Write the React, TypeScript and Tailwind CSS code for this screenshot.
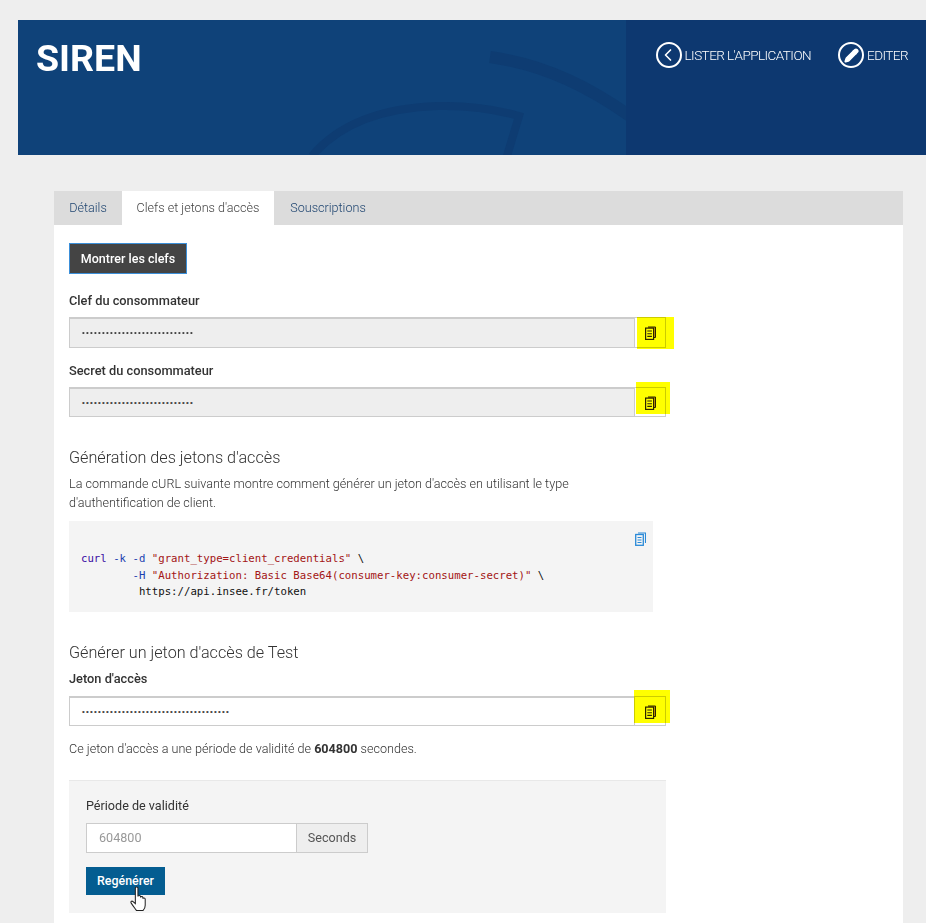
import { ChevronLeft, Pencil } from "lucide-react";

const tabs = [
  { name: "Détails", active: false, pad: "w-[68px]" },
  { name: "Clefs et jetons d'accès", active: true, pad: "w-[152px]" },
  { name: "Souscriptions", active: false, pad: "w-[108px]" },
];

function CopyIcon({ color = "#2a2400", fill = "#d9a400" }: { color?: string; fill?: string }) {
  return (
    <svg width="11" height="14" viewBox="0 0 11 14" fill="none" className="block">
      <path d="M3 1h7.500v10.500H8.500" stroke={color} strokeWidth="1" fill={fill} />
      <rect x="0.6" y="2.1" width="8" height="11.300" stroke={color} strokeWidth="1.200" fill="#ffff00" />
      <path d="M2.300 5h4.600M2.300 7.700h4.600M2.300 10.400h4.600" stroke={color} strokeWidth="1.100" />
    </svg>
  );
}

function SecretField({ label, dots, disabled, highlight, topClass, height, labelGap }: { label: string; dots: number; disabled?: boolean; highlight: string; topClass: string; height: string; labelGap: string }) {
  return (
    <div className={topClass}>
      <label className={`block text-[12.8px] leading-[18px] font-medium text-[#333] ${labelGap}`}>{label}</label>
      <div className={`relative flex w-[597px] ${height}`}>
        <div className={`flex-1 flex items-center pl-[12px] border border-t-2 border-[#cccccc] text-[#444] ${disabled ? "bg-[#eeeeee]" : "bg-white"}`}>
          {"•".repeat(dots).split("").map((d, i) => (
            <span key={i} className="text-[8px] w-[4px] leading-none font-['Liberation_Sans',sans-serif]">{d}</span>
          ))}
        </div>
        <div className="w-[32px] -ml-px border border-[#cccccc] bg-white" />
        {/* marker surligné par dessus le bouton */}
        <div className={`absolute bg-[#ffff00] mix-blend-multiply ${highlight}`} />
        <div className="absolute left-[576px] top-[9px]">
          <CopyIcon />
        </div>
      </div>
    </div>
  );
}

export default function App() {
  return (
    <div className="h-[923px] overflow-hidden bg-[#eeeeee] pt-[20px] font-['Roboto',sans-serif] text-[#333]">
      <header className="relative ml-[18px] h-[135px] bg-[#0f4279] overflow-hidden flex">
        <svg className="absolute left-0 top-0" width="908" height="135" viewBox="0 0 908 135" fill="none">
          <path d="M472 37C530 45 575 70 612 96" stroke="#0e3c72" strokeWidth="12" />
          <path d="M294 136C320 105 360 88 420 86C455 85 480 90 501 96L489 136" stroke="#0e3c72" strokeWidth="8" />
        </svg>
        <h1 className="relative flex-1 pl-[18px] pt-[15px] text-[37.500px] leading-[46px] font-bold text-white">SIREN</h1>
        <div className="relative w-[300px] bg-[#0d3870] flex items-start justify-end gap-[27px] pt-[22px] pr-[18px] text-white text-[13.500px] font-light">
          <a className="flex items-center gap-[3px] tracking-[-0.55px]">
            <span className="w-[26px] h-[26px] rounded-full border-2 border-white flex items-center justify-center">
              <ChevronLeft size={20} strokeWidth={2} className="-ml-[2px]" />
            </span>
            LISTER L'APPLICATION
          </a>
          <a className="flex items-center gap-[3px] tracking-[-0.55px]">
            <span className="w-[26px] h-[26px] rounded-full border-2 border-white flex items-center justify-center">
              <Pencil size={15} strokeWidth={2.500} fill="white" />
            </span>
            EDITER
          </a>
        </div>
      </header>

      <main className="ml-[54px] mr-[23px] mt-[36px]">
        <nav className="flex h-[34px] bg-[#dcdcdc]">
          {tabs.map((t) => (
            <a
              key={t.name}
              className={`flex items-center justify-center text-[12.600px] font-light ${t.pad} ${t.active ? "bg-white text-[#444]" : "text-[#1f4570]"}`}
            >
              {t.name}
            </a>
          ))}
        </nav>

        <section className="bg-white h-[700px] pl-[15px] pt-[18px]">
          <button className="block w-[118px] h-[31px] pt-[1px] bg-[#444444] border border-[#3b8fd9] text-white text-[12.500px] font-medium">
            Montrer les clefs
          </button>

          <SecretField label="Clef du consommateur" dots={28} disabled height="h-[31px]" labelGap="mb-[7px]" topClass="mt-[18px]" highlight="left-[568px] top-0 w-[37px] h-[32px]" />
          <SecretField label="Secret du consommateur" dots={28} disabled height="h-[30px]" labelGap="mb-[7px]" topClass="mt-[14px]" highlight="left-[567px] -top-[5px] w-[34px] h-[32px]" />

          <div className="w-[584px]">
            <h3 className="mt-[29px] text-[16.200px] leading-[24px] font-light text-[#333]">Génération des jetons d'accès</h3>
            <p className="mt-[4px] text-[12.600px] leading-[19px] font-light text-[#333]">
              La commande cURL suivante montre comment générer un jeton d'accès en utilisant le type
              <br />
              d'authentification de client.
            </p>
            <div className="relative mt-[9px] h-[91px] bg-[#f4f4f4] pl-[12px] pt-[30px] font-['DejaVu_Sans_Mono',monospace] text-[10.700px] leading-[16.500px] whitespace-pre text-[#111]">
              <div className="absolute right-[7px] top-[11px]">
                <svg width="11" height="14" viewBox="0 0 11 14" fill="none" stroke="#2a8ad8" className="block">
                  <path d="M3 1h7.500v10" strokeWidth="1.100" />
                  <rect x="0.7" y="2.500" width="7.600" height="10.800" strokeWidth="1.300" />
                  <path d="M2.500 5.500h4M2.500 8h4M2.500 10.500h4" strokeWidth="1" />
                </svg>
              </div>
              <div>
                <span className="text-[#3a0ca3]">curl</span> <span className="text-[#1a3fb0]">-k -d</span>{" "}
                <span className="text-[#a31515]">"grant_type=client_credentials"</span> \
              </div>
              <div>
                {"        "}
                <span className="text-[#1a3fb0]">-H</span>{" "}
                <span className="text-[#a31515]">"Authorization: Basic Base64(consumer-key:consumer-secret)"</span> \
              </div>
              <div>{"         "}https://api.insee.fr/token</div>
            </div>
            <h3 className="mt-[29px] text-[16.200px] leading-[24px] font-light text-[#333]">Générer un jeton d'accès de Test</h3>
          </div>

          <SecretField label="Jeton d'accès" dots={37} height="h-[30px]" labelGap="mb-[8px]" topClass="mt-[5px]" highlight="left-[565px] -top-[6px] w-[36px] h-[33px]" />

          <p className="mt-[13px] text-[12.600px] leading-[19px] font-light">
            Ce jeton d'accès a une période de validité de <strong className="font-bold">604800</strong> secondes.
          </p>

          <div className="mt-[22px] w-[597px] h-[133px] bg-[#f4f4f4] border-t border-[#e8e8e8] pl-[17px] pt-[16px]">
            <label className="block text-[12.600px] leading-[18px] font-normal text-[#333]">Période de validité</label>
            <div className="flex mt-[8px] w-[282px] h-[30px]">
              <div className="w-[210px] bg-white border border-r-0 border-[#cccccc] flex items-center pl-[12px] text-[12.600px] text-[#999]">604800</div>
              <div className="flex-1 bg-[#eeeeee] border border-[#cccccc] flex items-center justify-center text-[12.600px] text-[#555]">Seconds</div>
            </div>
            <button className="relative block mt-[14px] w-[79px] h-[28px] bg-[#045d91] text-white text-[12.400px] font-medium">
              Regénérer
              <svg className="absolute left-[43px] top-[19px]" width="21" height="27" viewBox="0 0 20 26" fill="white" stroke="#222" strokeWidth="1">
                <path d="M6 2c0-1.500 2.500-1.500 2.500 0v8c0-1 2-1.500 2.500 0v1c0-1 2-1.300 2.300.2v1c.3-1 2-1 2.200.3v6c0 2-1 4-2 5H7c-1-1.500-3-4-5-7-1-1.500.5-2.500 1.800-1.500L6 17z" />
              </svg>
            </button>
          </div>
        </section>
      </main>
    </div>
  );
}
